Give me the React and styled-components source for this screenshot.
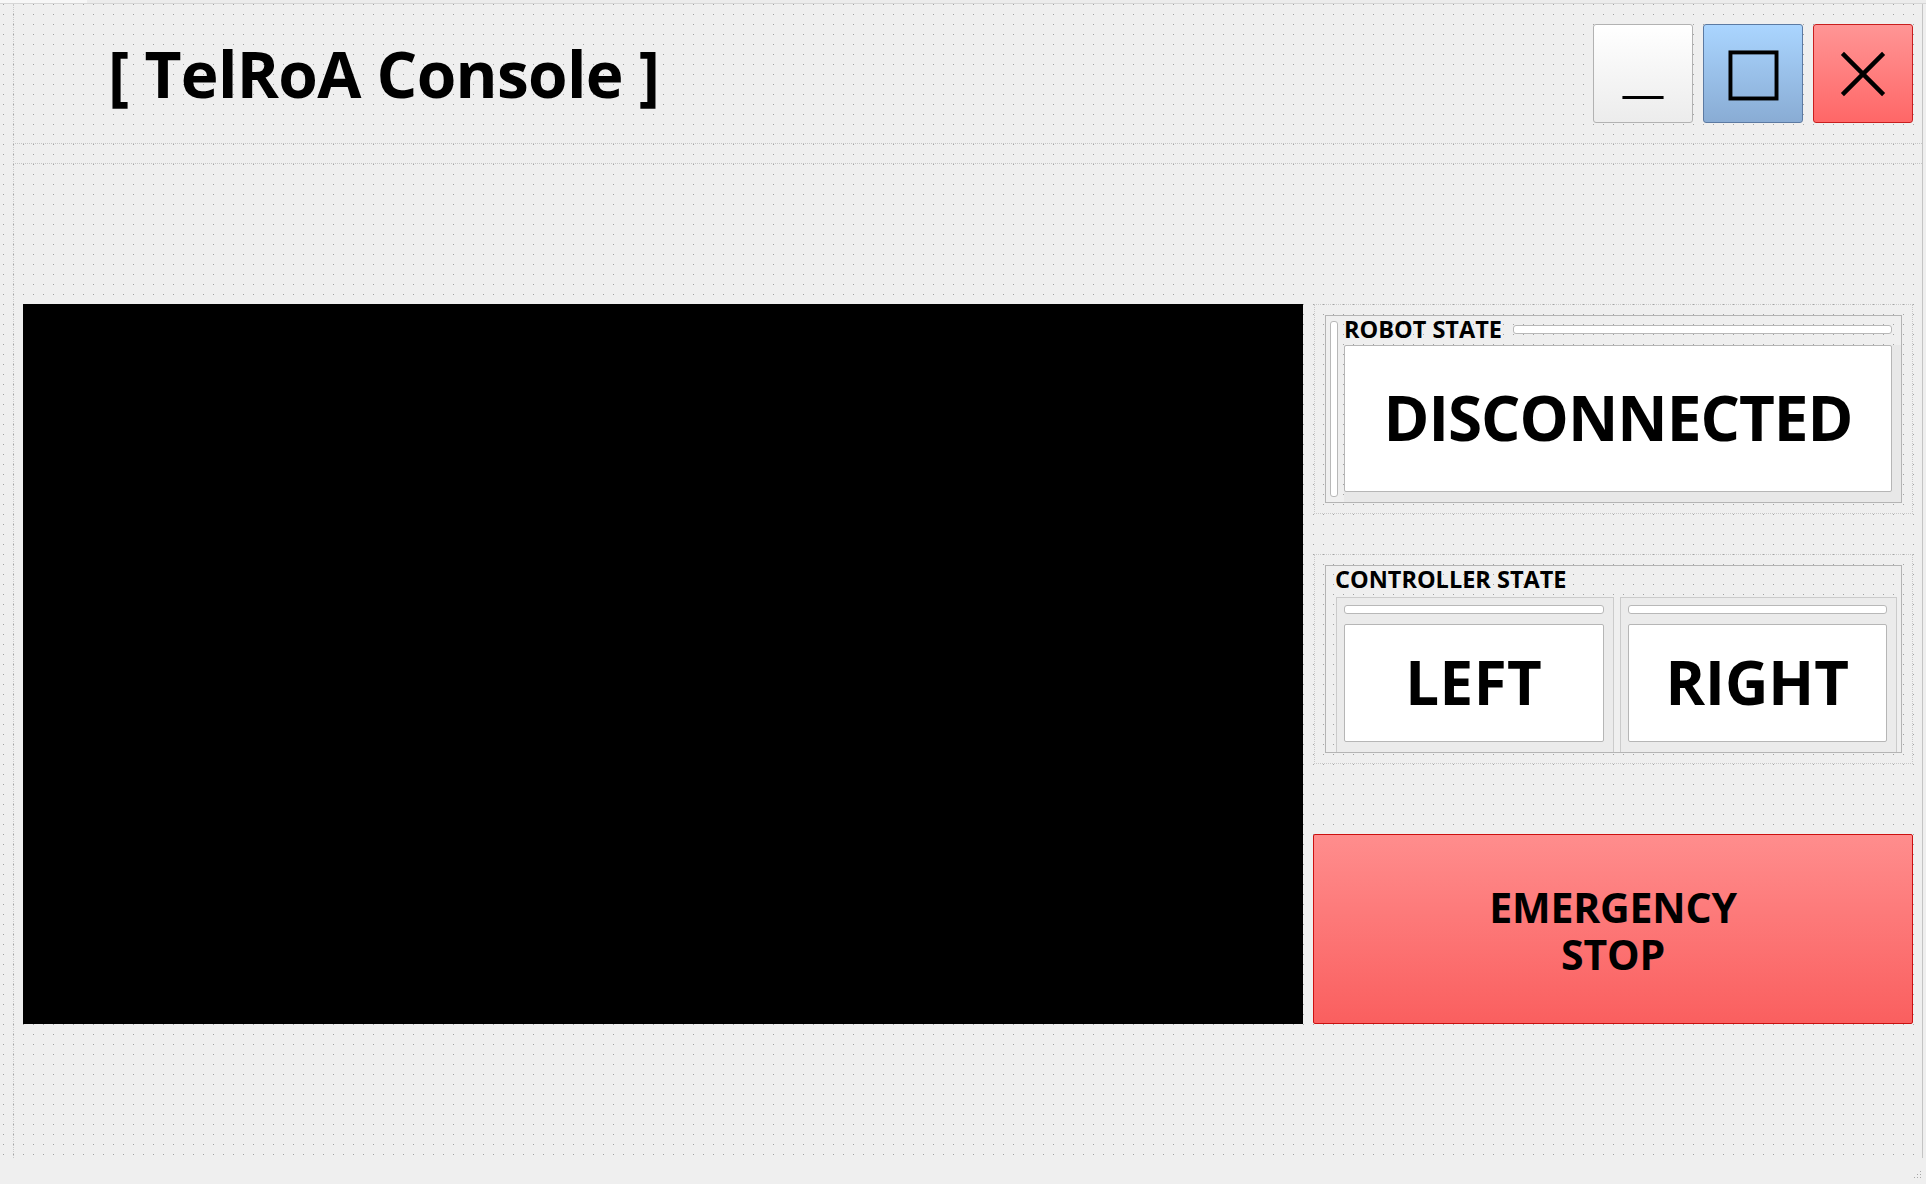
import React from 'react';
import styled, { createGlobalStyle } from 'styled-components';

const GlobalStyle = createGlobalStyle`
  html, body {
    margin: 0;
    padding: 0;
    background: #efefef;
  }
  body {
    font-family: "Open Sans", "DejaVu Sans", sans-serif;
    color: #000;
  }
`;

const Window = styled.div`
  width: 1926px;
  height: 1184px;
  display: flex;
  flex-direction: column;
  background: #efefef;
  overflow: hidden;
`;

const TopStrip = styled.div`
  height: 3px;
  display: flex;
  border-bottom: 1px solid #d6d6d6;
  background: #ececec;
`;

const TopTab = styled.div`
  width: 87px;
  background: #f7f7f7;
`;

const Form = styled.div`
  width: 1922px;
  height: 1154px;
  display: flex;
  flex-direction: column;
  border-right: 1px solid #c4c4c4;
  background-color: #efefef;
  background-image: conic-gradient(from 270deg at 1px 1px, #a2a2a2 25%, transparent 0);
  background-size: 10px 10px;
  background-position: 3px 0;
  background-repeat: repeat;
  position: relative;
`;

const LeftGuide = styled.div`
  position: absolute;
  left: 13px;
  top: 0;
  bottom: 0;
  border-left: 1px dotted #c9c9c9;
`;

const Header = styled.div`
  height: 140px;
  margin-left: 13px;
  display: flex;
  align-items: flex-start;
  justify-content: space-between;
  border-bottom: 1px dotted #c6c6c6;
  box-sizing: border-box;
`;

const Title = styled.h1`
  margin: 38px 0 0 95px;
  font-size: 64px;
  font-weight: 700;
  line-height: 1;
  letter-spacing: -0.7px;
  white-space: pre;
`;

const WindowButtons = styled.div`
  display: flex;
  gap: 10px;
  margin: 20px 9px 0 0;
`;

const tones = {
  min: { top: '#ffffff', bottom: '#ececec', border: '#b2b2b2' },
  max: { top: '#aad5ff', bottom: '#89acd4', border: '#5c7aa2' },
  close: { top: '#ff9595', bottom: '#ff6767', border: '#c81e1e' },
};

const WinButton = styled.button`
  width: 100px;
  height: 99px;
  padding: 0;
  display: flex;
  align-items: center;
  justify-content: center;
  border: 1px solid ${p => tones[p.$tone].border};
  border-radius: 3px;
  background: linear-gradient(${p => tones[p.$tone].top}, ${p => tones[p.$tone].bottom});
  box-sizing: border-box;
`;

const GuideBand = styled.div`
  height: 20px;
  margin-left: 13px;
  border-bottom: 1px dotted #c6c6c6;
  box-sizing: border-box;
`;

const Body = styled.div`
  margin-top: 140px;
  padding-left: 23px;
  display: flex;
  gap: 10px;
`;

const Video = styled.div`
  width: 1280px;
  height: 720px;
  background: #000;
`;

const SideColumn = styled.div`
  width: 600px;
  height: 720px;
  display: flex;
  flex-direction: column;
`;

const Slot = styled.div`
  height: 210px;
  margin-left: 1px;
  padding: 10px;
  border: 1px dotted #c9c9c9;
  box-sizing: border-box;
  display: flex;
`;

const GroupBox = styled.div`
  flex: 1;
  border: 1px solid #b4b4b4;
  box-sizing: border-box;
  display: flex;
  flex-direction: ${p => (p.$column ? 'column' : 'row')};
`;

const Bar = styled.div`
  background: #fff;
  border: 1px solid #b8b8b8;
  border-radius: 3px;
  box-sizing: border-box;
`;

const VBar = styled(Bar)`
  width: 8px;
  margin: 5px 6px 5px 4px;
`;

const HBar = styled(Bar)`
  height: 9px;
  flex: 1;
  margin: 9px 9px 0 11px;
`;

const GroupContent = styled.div`
  flex: 1;
  display: flex;
  flex-direction: column;
`;

const GroupHead = styled.div`
  height: 29px;
  display: flex;
  align-items: flex-start;
`;

const Label = styled.div`
  height: 24px;
  font-size: 23.5px;
  font-weight: 700;
  line-height: 24px;
  letter-spacing: 0;
  margin-top: 1px;
  margin-left: ${p => p.$indent || 0}px;
  white-space: nowrap;
`;

const ValuePanel = styled.div`
  flex: 1;
  display: flex;
  padding: 0 9px 10px 0;
  background: #e8e8e8;
`;

const ValueBox = styled.div`
  flex: 1;
  display: flex;
  align-items: center;
  justify-content: center;
  background: #fff;
  border: 1px solid #b6b6b6;
  border-radius: 2px;
  box-sizing: border-box;
  font-size: ${p => p.$size}px;
  font-weight: 700;
  letter-spacing: ${p => p.$spacing}px;
  line-height: 1;
  padding-bottom: 3px;
`;

const Spacer = styled.div`
  height: ${p => p.$h}px;
`;

const ControllerRow = styled.div`
  flex: 1;
  display: flex;
  gap: 6px;
  margin: 6px 4px 0 10px;
`;

const SidePanel = styled.div`
  flex: 1;
  display: flex;
  flex-direction: column;
  padding: 7px 9px 10px 7px;
  border: 1px solid #cbcbcb;
  border-bottom: none;
  background: #ebebeb;
  gap: 10px;
`;

const SideBar = styled(Bar)`
  height: 9px;
`;

const EmergencyButton = styled.button`
  height: 190px;
  width: 600px;
  padding: 3px 0 0;
  border: 1px solid #cc1010;
  border-radius: 2px;
  background: linear-gradient(#ff8d8d, #fa5f5f);
  font-family: "Open Sans", "DejaVu Sans", sans-serif;
  font-size: 41px;
  font-weight: 700;
  line-height: 47px;
  letter-spacing: -0.2px;
  color: #000;
  box-sizing: border-box;
`;

const BottomStrip = styled.div`
  flex: 1;
  display: flex;
  justify-content: flex-end;
  align-items: flex-end;
  padding: 0 4px 4px 0;
`;

const MinIcon = () => (
  <svg width="100" height="99" viewBox="0 0 100 99">
    <line x1="29" y1="74" x2="71" y2="74" stroke="#000" strokeWidth="3" />
  </svg>
);

const MaxIcon = () => (
  <svg width="100" height="99" viewBox="0 0 100 99">
    <rect x="27" y="28" width="47" height="47" fill="none" stroke="#000" strokeWidth="4" />
  </svg>
);

const CloseIcon = () => (
  <svg width="100" height="99" viewBox="0 0 100 99">
    <path d="M29 29 L71 71 M71 29 L29 71" stroke="#000" strokeWidth="4.5" />
  </svg>
);

const SizeGrip = () => (
  <svg width="10" height="10" viewBox="0 0 10 10">
    {[[8, 1], [5, 4], [8, 4], [2, 7], [5, 7], [8, 7]].map(([x, y], i) => (
      <rect key={i} x={x} y={y} width="1" height="1" fill="#a8a8a8" />
    ))}
  </svg>
);

export default function App() {
  return (
    <>
      <GlobalStyle />
      <Window>
        <TopStrip>
          <TopTab />
        </TopStrip>
        <Form>
          <LeftGuide />
          <Header>
            <Title>[ TelRoA Console ]</Title>
            <WindowButtons>
              <WinButton $tone="min"><MinIcon /></WinButton>
              <WinButton $tone="max"><MaxIcon /></WinButton>
              <WinButton $tone="close"><CloseIcon /></WinButton>
            </WindowButtons>
          </Header>
          <GuideBand />
          <Body>
            <Video />
            <SideColumn>
              <Slot>
                <GroupBox>
                  <VBar />
                  <GroupContent>
                    <GroupHead>
                      <Label>ROBOT STATE</Label>
                      <HBar />
                    </GroupHead>
                    <ValuePanel>
                      <ValueBox $size={62} $spacing={-1}>DISCONNECTED</ValueBox>
                    </ValuePanel>
                  </GroupContent>
                </GroupBox>
              </Slot>
              <Spacer $h={40} />
              <Slot>
                <GroupBox $column>
                  <Label $indent={9}>CONTROLLER STATE</Label>
                  <ControllerRow>
                    <SidePanel>
                      <SideBar />
                      <ValueBox $size={60} $spacing={0.5}>LEFT</ValueBox>
                    </SidePanel>
                    <SidePanel>
                      <SideBar />
                      <ValueBox $size={60} $spacing={0}>RIGHT</ValueBox>
                    </SidePanel>
                  </ControllerRow>
                </GroupBox>
              </Slot>
              <Spacer $h={70} />
              <EmergencyButton>
                EMERGENCY
                <br />
                STOP
              </EmergencyButton>
            </SideColumn>
          </Body>
        </Form>
        <BottomStrip>
          <SizeGrip />
        </BottomStrip>
      </Window>
    </>
  );
}
